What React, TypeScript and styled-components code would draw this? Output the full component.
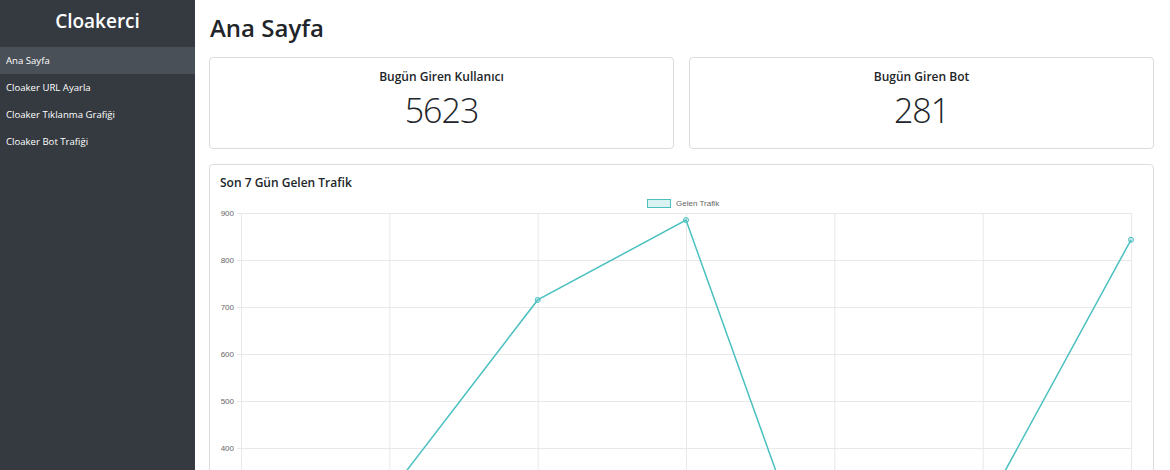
import styled, { createGlobalStyle } from 'styled-components'

// Global

const GlobalStyle = createGlobalStyle`
  * { box-sizing: border-box; }
  body {
    margin: 0;
    background: #fff;
    color: #212529;
    font-family: "Segoe UI", "Open Sans", "Noto Sans", sans-serif;
  }
`

// Data

const navItems = ['Ana Sayfa', 'Cloaker URL Ayarla', 'Cloaker Tıklanma Grafiği', 'Cloaker Bot Trafiği']

const traffic = [120, 304, 715, 885, 4, 264, 843]

// Layout styles

const Layout = styled.div`
  display: flex;
  min-height: 100vh;
`

const Sidebar = styled.aside`
  width: 195px;
  flex-shrink: 0;
  background: #343a40;
  color: #fff;
`

const Brand = styled.div`
  height: 47px;
  display: flex;
  align-items: center;
  justify-content: center;
  font-size: 19px;
  font-weight: 600;
  padding-bottom: 5px;
`

const NavList = styled.ul`
  list-style: none;
  margin: 0;
  padding: 0;
`

const NavItem = styled.li<{ active?: boolean }>`
  height: 27px;
  display: flex;
  align-items: center;
  padding: 0 6px;
  font-size: 9.6px;
  background: ${p => (p.active ? '#4a5058' : 'transparent')};
`

const Main = styled.main`
  flex: 1;
  padding: 10px 16px 20px 14px;
`

const PageTitle = styled.h1`
  margin: 0 0 11px 1px;
  font-size: 24px;
  font-weight: 600;
  line-height: 36px;
`

const StatsRow = styled.div`
  display: grid;
  grid-template-columns: 1fr 1fr;
  gap: 15px;
  margin-bottom: 15px;
`

const Card = styled.div`
  border: 1px solid #dcdcdc;
  border-radius: 4px;
  background: #fff;
`

const StatCard = styled(Card)`
  height: 92px;
  display: flex;
  flex-direction: column;
  align-items: center;
  padding-top: 10px;
`

const StatLabel = styled.div`
  font-size: 12px;
  font-weight: 600;
  line-height: 18px;
`

const StatValue = styled.div`
  font-size: 34px;
  font-weight: 300;
  line-height: 48px;
  letter-spacing: -1px;
`

const ChartCard = styled(Card)`
  padding: 8px 10px 10px 10px;
`

const ChartTitle = styled.div`
  font-size: 12px;
  font-weight: 600;
  line-height: 20px;
`

const ChartSvg = styled.svg`
  display: block;
  font-family: "Liberation Sans", Arial, sans-serif;
`

// Chart

const PLOT_L = 21
const PLOT_R = 911
const PLOT_T = 20
const PX_PER_UNIT = 0.47
const yOf = (v: number) => PLOT_T + (900 - v) * PX_PER_UNIT
const xOf = (i: number) => PLOT_L + ((PLOT_R - PLOT_L) / 6) * i
const days = ['Pzt', 'Sal', 'Çar', 'Per', 'Cum', 'Cmt', 'Paz']

const TrafficChart = () => {
  const bottom = yOf(0)
  const ticks = [900, 800, 700, 600, 500, 400, 300, 200, 100, 0]
  const points = traffic.map((v, i) => `${xOf(i)},${yOf(v)}`).join(' ')
  return (
    <ChartSvg width={923} height={bottom + 24}>
      {/* legend */}
      <rect x={427.5} y={6.5} width={23} height={8} fill="rgba(75,192,192,0.2)" stroke="#4bc0c0" />
      <text x={456} y={13} fontSize={8} fill="#666">Gelen Trafik</text>
      {/* horizontal grid */}
      {ticks.map(t => (
        <g key={t}>
          <line x1={PLOT_L - 4} x2={PLOT_R} y1={yOf(t) + 0.5} y2={yOf(t) + 0.5} stroke="#e8e8e8" />
          <text x={14} y={yOf(t) + 3} fontSize={8} fill="#666" textAnchor="end">{t}</text>
        </g>
      ))}
      {/* vertical grid */}
      {traffic.map((_, i) => (
        <g key={i}>
          <line x1={xOf(i) + 0.5} x2={xOf(i) + 0.5} y1={PLOT_T} y2={bottom + 4} stroke="#e8e8e8" />
          <text x={xOf(i)} y={bottom + 14} fontSize={8} fill="#666" textAnchor="middle">{days[i]}</text>
        </g>
      ))}
      <polyline points={points} fill="none" stroke="#4bc0c0" strokeWidth={1.5} />
      {traffic.map((v, i) => (
        <circle key={i} cx={xOf(i)} cy={yOf(v)} r={2.5} fill="rgba(75,192,192,0.25)" stroke="#4bc0c0" strokeWidth={1} />
      ))}
    </ChartSvg>
  )
}

// Component

export default function App() {
  return (
    <>
      <GlobalStyle />
      <Layout>
        <Sidebar>
          <Brand>Cloakerci</Brand>
          <NavList>
            {navItems.map((item, i) => (
              <NavItem key={item} active={i === 0}>
                {item}
              </NavItem>
            ))}
          </NavList>
        </Sidebar>
        <Main>
          <PageTitle>Ana Sayfa</PageTitle>
          <StatsRow>
            <StatCard>
              <StatLabel>Bugün Giren Kullanıcı</StatLabel>
              <StatValue>5623</StatValue>
            </StatCard>
            <StatCard>
              <StatLabel>Bugün Giren Bot</StatLabel>
              <StatValue>281</StatValue>
            </StatCard>
          </StatsRow>
          <ChartCard>
            <ChartTitle>Son 7 Gün Gelen Trafik</ChartTitle>
            <TrafficChart />
          </ChartCard>
        </Main>
      </Layout>
    </>
  )
}
